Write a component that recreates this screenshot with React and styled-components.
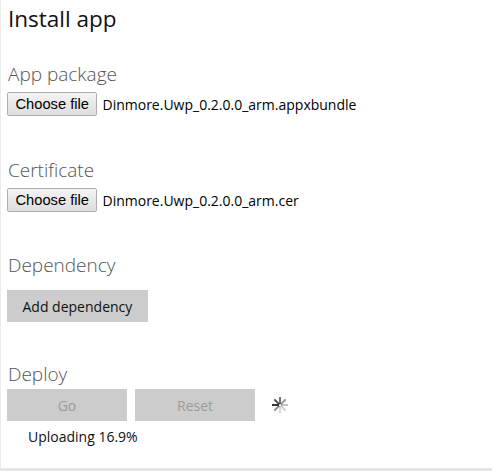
import React from "react";
import styled, { createGlobalStyle } from "styled-components";

const Global = createGlobalStyle`
  html, body { margin: 0; padding: 0; background: #fff; }
  body { font-family: "Open Sans", "Noto Sans", sans-serif; color: #000; }
`;

const Page = styled.div`
  width: 492px;
  height: 471px;
  box-sizing: border-box;
  border-left: 1px solid #ececec;
  border-bottom: 3px solid #e6e6e6;
  padding: 0 0 0 6px;
  overflow: hidden;
`;

const Title = styled.h1`
  margin: 0 0 0 1px;
  padding-top: 2px;
  font-size: 22.5px;
  font-weight: 400;
  line-height: 33px;
  color: #111;
`;

const Section = styled.section`
  margin-top: ${(p) => p.$gap}px;
  display: flex;
  flex-direction: column;
`;

const Heading = styled.h2`
  margin: 0 0 0 1px;
  font-size: 19px;
  font-weight: 300;
  line-height: 26px;
  color: #555;
`;

const FileRow = styled.div`
  display: flex;
  align-items: center;
  gap: 5px;
  height: 24px;
  margin-top: 5px;
`;

const FileButton = styled.button`
  font-family: "Liberation Sans", Arial, sans-serif;
  font-size: 14.7px;
  height: 24px;
  padding: 0 7.5px;
  border: 1px solid #adadad;
  border-radius: 2px;
  background: linear-gradient(#f4f4f4, #dedede);
  color: #000;
`;

const FileName = styled.span`
  font-size: 14px;
  color: #000;
`;

const FlatButton = styled.button`
  font-family: inherit;
  font-size: 14px;
  height: 32px;
  width: ${(p) => (p.$w ? p.$w + "px" : "auto")};
  padding: 0 ${(p) => (p.$w ? 0 : 15.5)}px;
  border: none;
  background: #cccccc;
  color: ${(p) => (p.disabled ? "#9b9b9b" : "#111")};
`;

const ButtonRow = styled.div`
  display: flex;
  align-items: center;
  gap: 8px;
  margin-top: ${(p) => p.$top}px;
`;

const Spinner = styled.svg`
  margin-left: 8px;
`;

const Status = styled.div`
  margin: 6px 0 0 21px;
  font-size: 14px;
  color: #111;
`;

function Asterisk() {
  const ops = [1, 0.85, 0.7, 0.5, 0.3, 0.22, 0.2, 0.55];
  return (
    <Spinner width="18" height="18" viewBox="0 0 18 18">
      {ops.map((o, i) => {
        const a = ((180 + i * 45) * Math.PI) / 180;
        return (
          <line
            key={i}
            x1={9 + Math.cos(a) * 1}
            y1={9 + Math.sin(a) * 1}
            x2={9 + Math.cos(a) * 8}
            y2={9 + Math.sin(a) * 8}
            stroke="#222"
            strokeOpacity={o}
            strokeWidth="1.8"
          />
        );
      })}
    </Spinner>
  );
}

export default function App() {
  return (
    <Page>
      <Global />
      <Title>Install app</Title>
      <Section $gap={26}>
        <Heading>App package</Heading>
        <FileRow>
          <FileButton>Choose file</FileButton>
          <FileName>Dinmore.Uwp_0.2.0.0_arm.appxbundle</FileName>
        </FileRow>
      </Section>
      <Section $gap={41}>
        <Heading>Certificate</Heading>
        <FileRow>
          <FileButton>Choose file</FileButton>
          <FileName>Dinmore.Uwp_0.2.0.0_arm.cer</FileName>
        </FileRow>
      </Section>
      <Section $gap={40}>
        <Heading>Dependency</Heading>
        <ButtonRow $top={12}>
          <FlatButton>Add dependency</FlatButton>
        </ButtonRow>
      </Section>
      <Section $gap={39}>
        <Heading>Deploy</Heading>
        <ButtonRow $top={2}>
          <FlatButton $w={120} disabled>Go</FlatButton>
          <FlatButton $w={120} disabled>Reset</FlatButton>
          <Asterisk />
        </ButtonRow>
        <Status>Uploading 16.9%</Status>
      </Section>
    </Page>
  );
}
